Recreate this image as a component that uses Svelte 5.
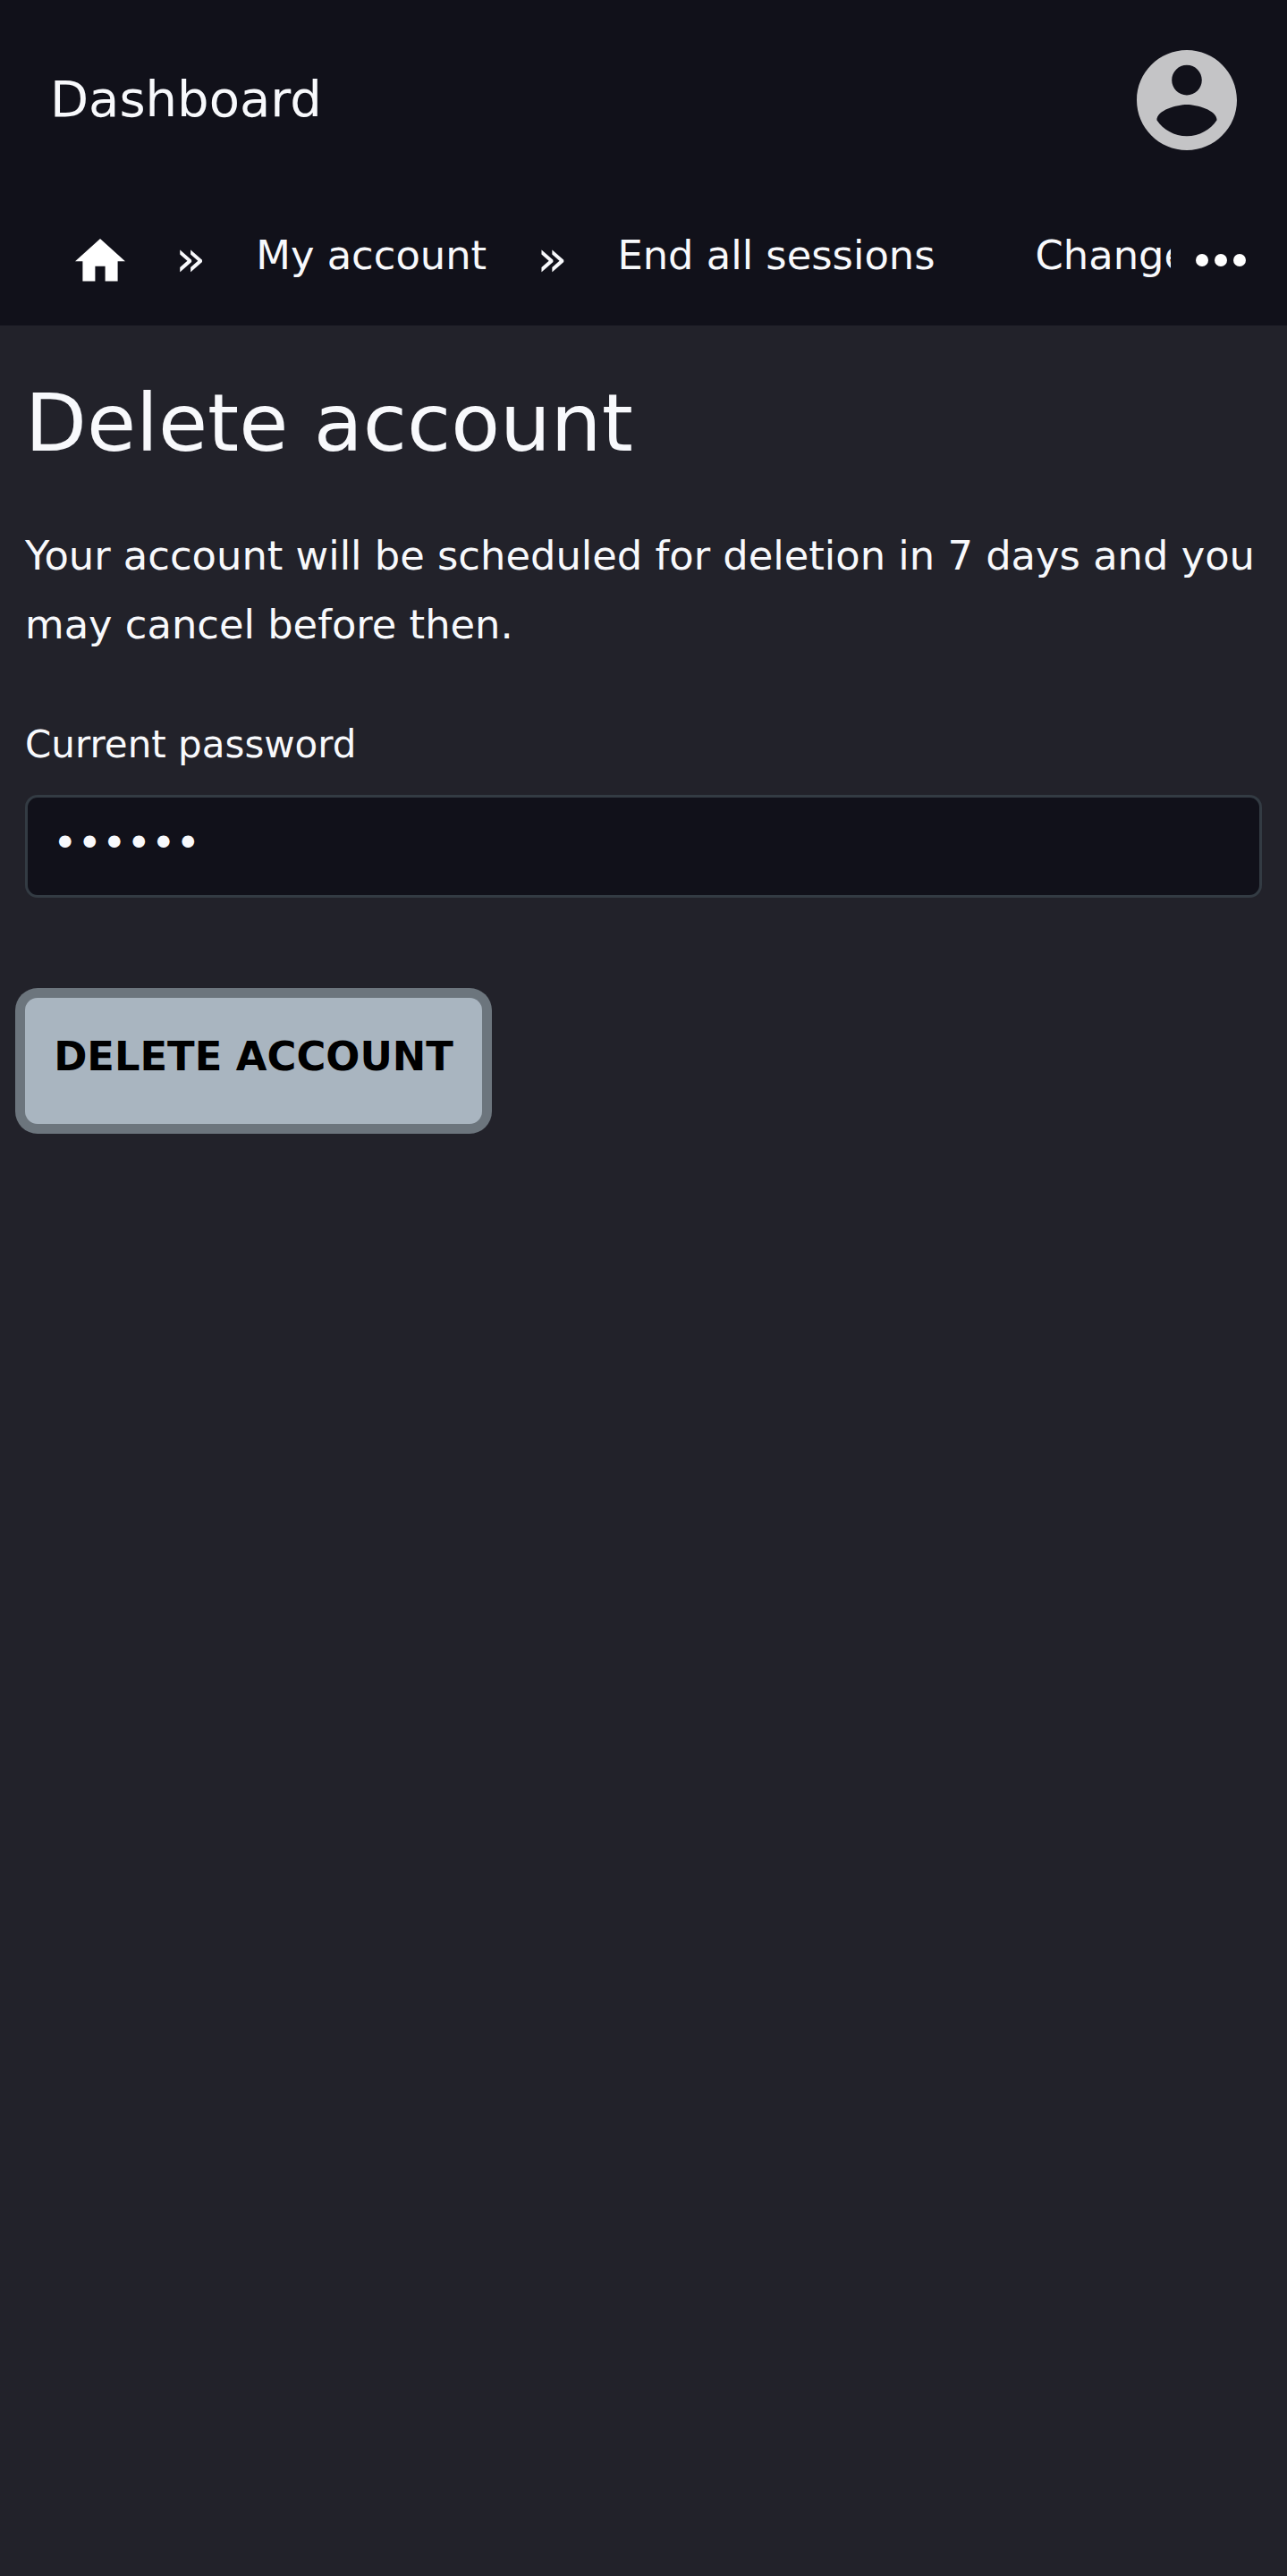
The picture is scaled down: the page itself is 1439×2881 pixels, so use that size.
<script lang="ts">
  const crumbs = ['My account', 'End all sessions'];
  let password = $state('secret');
</script>

<header>
  <div class="bar">
    <a class="brand" href="#dashboard">Dashboard</a>
    <svg class="avatar" viewBox="2 2 20 20" aria-label="Account">
      <path d="M12 2C6.48 2 2 6.48 2 12s4.48 10 10 10 10-4.48 10-10S17.52 2 12 2zm0 3c1.66 0 3 1.34 3 3s-1.34 3-3 3-3-1.34-3-3 1.34-3 3-3zm0 14.2c-2.5 0-4.71-1.28-6-3.22.03-1.99 4-3.08 6-3.08 1.99 0 5.97 1.09 6 3.08-1.29 1.94-3.5 3.22-6 3.22z" />
    </svg>
  </div>
  <nav>
    <div class="crumbs">
      <svg class="home" viewBox="2 3 20 17" aria-label="Home">
        <path d="M10 20v-6h4v6h5v-8h3L12 3 2 12h3v8z" />
      </svg>
      {#each crumbs as crumb}
        <span class="sep">»</span>
        <a href="#crumb">{crumb}</a>
      {/each}
      <a class="next" href="#email">Change email</a>
    </div>
    <button class="more" aria-label="More">
      <svg viewBox="0 0 24 24">
        <circle cx="6" cy="12" r="2" />
        <circle cx="12" cy="12" r="2" />
        <circle cx="18" cy="12" r="2" />
      </svg>
    </button>
  </nav>
</header>

<main>
  <h1>Delete account</h1>
  <p>Your account will be scheduled for deletion in 7 days and you may cancel before then.</p>
  <label for="password">Current password</label>
  <input id="password" type="password" bind:value={password} />
  <button class="submit">DELETE ACCOUNT</button>
</main>

<style>
  :global(body) {
    background: #22222a;
    color: #f8f9fc;
    font-family: 'DejaVu Sans', sans-serif;
  }
  a {
    color: inherit;
    text-decoration: none;
  }
  header {
    height: 364px;
    background: #11111a;
  }
  .bar {
    display: flex;
    justify-content: space-between;
    align-items: center;
    height: 224px;
    box-sizing: border-box;
    padding: 0 56px;
  }
  .brand {
    font-size: 56px;
    line-height: 84px;
    padding-bottom: 2px;
  }
  .avatar {
    width: 112px;
    height: 112px;
    fill: #c4c4c6;
  }
  nav {
    display: flex;
    height: 140px;
  }
  .crumbs {
    display: flex;
    flex: 1;
    min-width: 0;
    overflow: hidden;
    white-space: nowrap;
    font-size: 44.8px;
    line-height: 76px;
    padding: 24px 0 0 84px;
    box-sizing: border-box;
  }
  .home {
    flex: none;
    width: 56px;
    height: 47.6px;
    margin-top: 19px;
    fill: #fff;
  }
  .sep {
    font-size: 56px;
    margin: 3px 56px 0;
  }
  .next {
    margin-left: 112px;
  }
  .more {
    flex: none;
    width: 130px;
    height: 133px;
    padding: 0 0 0 14px;
    border: 0;
    background: none;
    text-align: left;
  }
  .more svg {
    display: block;
    width: 84px;
    height: 84px;
    fill: #fff;
  }
  main {
    min-height: 2517px;
    box-sizing: border-box;
    padding: 0 28px;
  }
  h1 {
    margin: 0;
    padding-top: 55px;
    font-size: 89.6px;
    font-weight: 400;
    line-height: 108px;
  }
  p {
    margin: 56px 0 0;
    font-size: 44.8px;
    line-height: 77px;
  }
  label {
    display: block;
    margin-top: 68px;
    font-size: 42px;
    line-height: 56px;
  }
  input {
    display: block;
    width: 100%;
    height: 115px;
    box-sizing: border-box;
    margin-top: 28px;
    padding: 0 28px 8px;
    border: 3px solid #333b43;
    border-radius: 14px;
    background: #11111a;
    color: #f8f9fc;
    font: 46.667px 'DejaVu Sans', sans-serif;
    outline: 0;
  }
  .submit {
    display: block;
    width: 511px;
    height: 140.5px;
    margin-top: 112px;
    padding: 0 0 10px;
    border: 0;
    border-radius: 14px;
    background: #a9b5c0;
    box-shadow: 0 0 0 11px #6c757d;
    color: #000;
    font: bold 44.8px 'DejaVu Sans', sans-serif;
  }
</style>
